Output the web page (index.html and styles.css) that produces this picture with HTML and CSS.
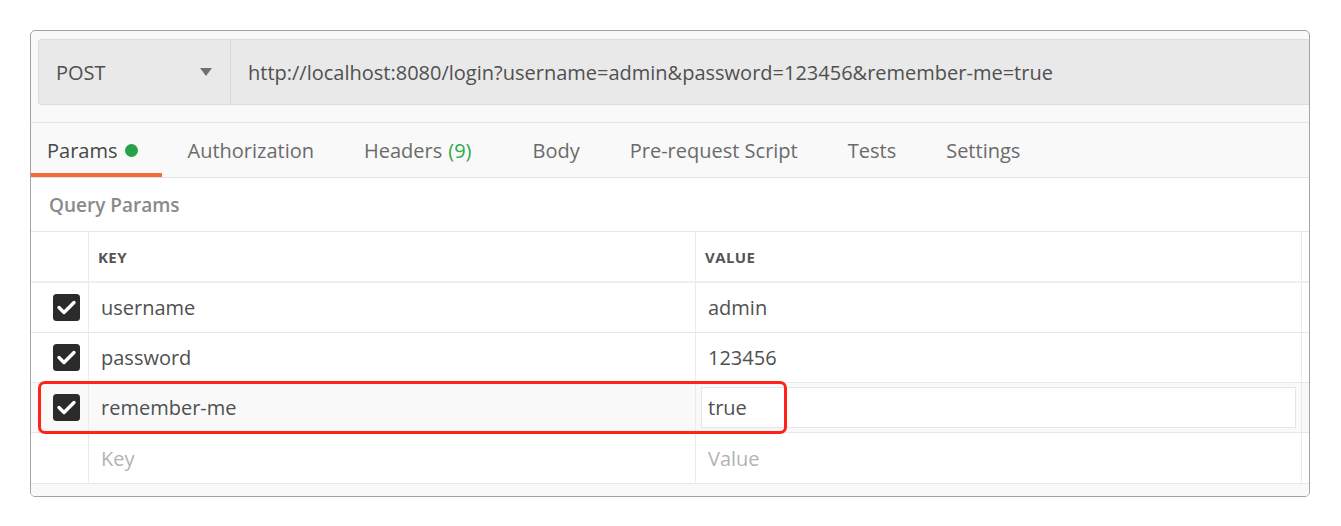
FILE: index.html
```html
<!DOCTYPE html>
<html lang="en">
<head>
    <meta charset="UTF-8">
    <title>Query Params</title>
    <link rel="stylesheet" href="styles.css">
</head>
<body>
    <div class="frame">
        <div class="request-bar">
            <div class="method">
                <span>POST</span>
                <span class="caret"></span>
            </div>
            <div class="url">http://localhost:8080/login?username=admin&amp;password=123456&amp;remember-me=true</div>
        </div>

        <div class="tabs">
            <div class="tab active">Params <span class="dot"></span></div>
            <div class="tab">Authorization</div>
            <div class="tab headers">Headers <span class="count">(9)</span></div>
            <div class="tab">Body</div>
            <div class="tab">Pre-request Script</div>
            <div class="tab">Tests</div>
            <div class="tab">Settings</div>
        </div>

        <div class="section-title">Query Params</div>

        <div class="params">
            <div class="row head">
                <div class="cell"></div>
                <div class="cell">KEY</div>
                <div class="cell">VALUE</div>
                <div class="cell"></div>
            </div>
            <div class="row">
                <div class="cell check-cell">
                    <svg class="check" width="27" height="27" viewBox="0 0 27 27"><rect width="27" height="27" rx="3.5" fill="#2b2b2b"/><polyline points="6,13.5 11,18.5 21,8.5" fill="none" stroke="#fff" stroke-width="3.4" stroke-linecap="round" stroke-linejoin="round"/></svg>
                </div>
                <div class="cell">username</div>
                <div class="cell">admin</div>
                <div class="cell"></div>
            </div>
            <div class="row">
                <div class="cell check-cell">
                    <svg class="check" width="27" height="27" viewBox="0 0 27 27"><rect width="27" height="27" rx="3.5" fill="#2b2b2b"/><polyline points="6,13.5 11,18.5 21,8.5" fill="none" stroke="#fff" stroke-width="3.4" stroke-linecap="round" stroke-linejoin="round"/></svg>
                </div>
                <div class="cell">password</div>
                <div class="cell">123456</div>
                <div class="cell"></div>
            </div>
            <div class="row hover">
                <div class="cell check-cell">
                    <svg class="check" width="27" height="27" viewBox="0 0 27 27"><rect width="27" height="27" rx="3.5" fill="#2b2b2b"/><polyline points="6,13.5 11,18.5 21,8.5" fill="none" stroke="#fff" stroke-width="3.4" stroke-linecap="round" stroke-linejoin="round"/></svg>
                </div>
                <div class="cell">remember-me</div>
                <div class="cell edit-cell"><div class="edit">true</div></div>
                <div class="cell"></div>
            </div>
            <div class="row last">
                <div class="cell"></div>
                <div class="cell placeholder">Key</div>
                <div class="cell placeholder">Value</div>
                <div class="cell"></div>
            </div>
            <div class="highlight"></div>
        </div>
        <div class="footer-strip"></div>
    </div>
</body>
</html>
```

FILE: styles.css
```css
body {
    margin: 0;
    background: #fff;
    font-family: 'Open Sans', 'Noto Sans', sans-serif;
    color: #505050;
}

.frame {
    margin: 30px 0 0 30px;
    width: 1278px;
    border: 1px solid #a3a3a3;
    border-radius: 5px;
    background: #f9f9f9;
    overflow: hidden;
}

.request-bar {
    display: flex;
    height: 64px;
    margin: 8px 0 0 7px;
    border: 1px solid #dcdcdc;
    border-right: none;
    border-radius: 4px 0 0 4px;
    background: #e9e9e9;
}

.method {
    width: 192px;
    box-sizing: border-box;
    padding: 0 18px 0 17px;
    display: flex;
    align-items: center;
    justify-content: space-between;
    border-right: 1px solid #dadada;
    font-size: 20px;
}

.caret {
    width: 0;
    height: 0;
    border-left: 6.5px solid transparent;
    border-right: 6.5px solid transparent;
    border-top: 8px solid #707070;
}

.url {
    display: flex;
    align-items: center;
    padding-left: 17px;
    font-size: 20px;
    white-space: nowrap;
}

.tabs {
    display: flex;
    margin-top: 17px;
    height: 54px;
    border-top: 1px solid #e6e6e6;
    border-bottom: 1px solid #e3e3e3;
}

.tab {
    display: flex;
    align-items: center;
    padding: 0 25px;
    font-size: 20px;
    color: #6b6b6b;
    box-sizing: border-box;
}

.tab.headers {
    padding-right: 36px;
}

.tab.active {
    padding: 4px 24px 0 16px;
    color: #474747;
    border-bottom: 4px solid #f26b3a;
}

.dot {
    width: 13px;
    height: 13px;
    margin-left: 8px;
    border-radius: 50%;
    background: #26a148;
}

.count {
    margin-left: 6px;
    color: #2fa84f;
}

.section-title {
    height: 53px;
    display: flex;
    align-items: center;
    padding-left: 18px;
    background: #fff;
    font-size: 19px;
    font-weight: 600;
    color: #8a8a8a;
}

.params {
    position: relative;
    background: #fff;
    border-top: 1px solid #e8e8e8;
}

.row {
    display: grid;
    grid-template-columns: 57px 607px 606px 1fr;
    height: 50px;
    box-sizing: border-box;
    border-bottom: 1px solid #e8e8e8;
}

.row.head {
    height: 51px;
    border-bottom: 2px solid #efefef;
}

.row.last {
    height: 51px;
}

.row.hover {
    background: #f9f9f9;
}

.cell {
    display: flex;
    align-items: center;
    padding-left: 12px;
    font-size: 20px;
    white-space: nowrap;
}

.cell + .cell {
    border-left: 1px solid #ebebeb;
}

.head .cell {
    padding-left: 9px;
    font-size: 15px;
    font-weight: 700;
    letter-spacing: 0.4px;
    color: #555;
}

.check-cell {
    padding-left: 22px;
}

.edit-cell {
    padding: 4px 5px;
}

.edit {
    flex: 1;
    height: 100%;
    display: flex;
    align-items: center;
    padding-left: 6px;
    background: #fff;
    border: 1px solid #e6e6e6;
    box-sizing: border-box;
}

.placeholder {
    color: #b3b3b3;
}

.highlight {
    position: absolute;
    left: 7px;
    top: 149px;
    width: 743px;
    height: 47px;
    border: 3px solid #ff2317;
    border-radius: 7px;
}

.footer-strip {
    height: 12px;
    background: #f9f9f9;
}
```
